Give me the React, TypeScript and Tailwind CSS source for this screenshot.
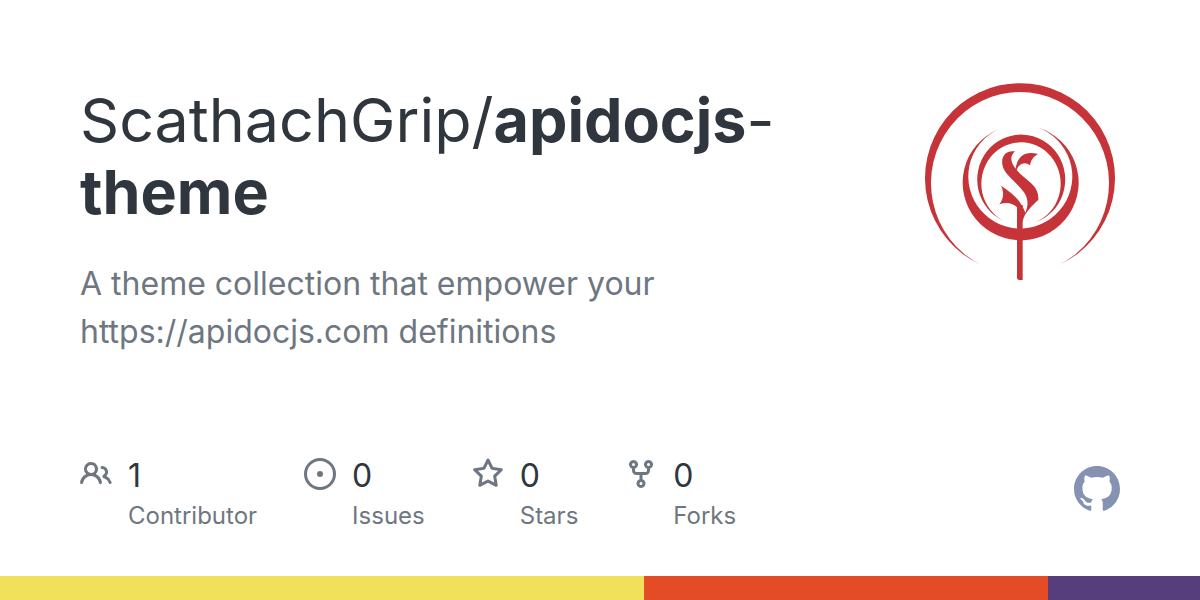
import type { ReactNode } from "react";

const stats = [
  {
    value: "1",
    label: "Contributor",
    path: "M2 5.5a3.5 3.5 0 1 1 5.898 2.549 5.508 5.508 0 0 1 3.034 4.084.75.75 0 1 1-1.482.235 4 4 0 0 0-7.9 0 .75.75 0 0 1-1.482-.236A5.507 5.507 0 0 1 3.102 8.05 3.493 3.493 0 0 1 2 5.5ZM11 4a3.001 3.001 0 0 1 2.22 5.018 5.01 5.01 0 0 1 2.56 3.012.749.749 0 0 1-.885.954.752.752 0 0 1-.549-.514 3.507 3.507 0 0 0-2.522-2.372.75.75 0 0 1-.574-.73v-.352a.75.75 0 0 1 .416-.672A1.5 1.5 0 0 0 11 5.5.75.75 0 0 1 11 4Zm-5.5-.5a2 2 0 1 0-.001 3.999A2 2 0 0 0 5.5 3.5Z",
  },
  {
    value: "0",
    label: "Issues",
    path: "M8 9.5a1.5 1.5 0 1 0 0-3 1.5 1.5 0 0 0 0 3ZM8 0a8 8 0 1 1 0 16A8 8 0 0 1 8 0ZM1.5 8a6.5 6.5 0 1 0 13 0 6.5 6.5 0 0 0-13 0Z",
  },
  {
    value: "0",
    label: "Stars",
    path: "M8 .25a.75.75 0 0 1 .673.418l1.882 3.815 4.21.612a.75.75 0 0 1 .416 1.279l-3.046 2.97.719 4.192a.751.751 0 0 1-1.088.791L8 12.347l-3.766 1.98a.75.75 0 0 1-1.088-.79l.72-4.194L.818 6.374a.75.75 0 0 1 .416-1.28l4.21-.611L7.327.668A.75.75 0 0 1 8 .25Zm0 2.445L6.615 5.5a.75.75 0 0 1-.564.41l-3.097.45 2.24 2.184a.75.75 0 0 1 .216.664l-.528 3.084 2.769-1.456a.75.75 0 0 1 .698 0l2.77 1.456-.53-3.084a.75.75 0 0 1 .216-.664l2.24-2.183-3.096-.45a.75.75 0 0 1-.564-.41L8 2.694Z",
  },
  {
    value: "0",
    label: "Forks",
    path: "M5 5.372v.878c0 .414.336.75.75.75h4.5a.75.75 0 0 0 .75-.75v-.878a2.25 2.25 0 1 1 1.5 0v.878a2.25 2.25 0 0 1-2.25 2.25h-1.5v2.128a2.251 2.251 0 1 1-1.5 0V8.5h-1.5A2.25 2.25 0 0 1 3.5 6.25v-.878a2.25 2.25 0 1 1 1.5 0ZM5 3.25a.75.75 0 1 0-1.5 0 .75.75 0 0 0 1.5 0Zm6.75.75a.75.75 0 1 0 0-1.5.75.75 0 0 0 0 1.5Zm-3 8.75a.75.75 0 1 0-1.5 0 .75.75 0 0 0 1.5 0Z",
  },
];

function Icon({ className, children }: { className: string; children: ReactNode }) {
  return (
    <svg viewBox="0 0 16 16" fill="currentColor" fillRule="evenodd" aria-hidden="true" className={className}>
      {children}
    </svg>
  );
}

function Avatar() {
  return (
    <svg viewBox="30 30 600 600" fill="#c63338" role="img" aria-label="ScathachGrip" className="size-[200px] shrink-0">
      <path d="M210 583A285 285 0 1 1 450 583A267 273 0 1 0 210 583Z" />
      <path d="M265 178A174 173 0 1 0 382 172A156 156 0 1 1 265 178Z" />
      <path d="M282 453A132 135 0 1 1 375 457A119 124 0 1 0 282 453Z" />
      <path d="M321 405H338V630H326Q321 630 321 622Z" />
      <path d="M315 244C285 240 272 262 278 288C284 315 325 340 344 370C354 388 356 405 346 428C335 400 318 375 273 347C284 368 280 388 268 403C290 395 310 400 321 412L338 455C342 430 365 408 385 390C388 345 350 335 320 300C325 282 345 272 360 286C363 270 370 260 384 252C350 242 322 255 317 296C300 275 300 258 315 244Z" />
    </svg>
  );
}

export default function App() {
  return (
    <div className="flex min-h-screen flex-col bg-white font-['Inter','Liberation_Sans',sans-serif] text-[#2f363d]">
      <main className="flex grow flex-col justify-between px-20 pt-20 pb-10">
        <div className="flex items-start justify-between">
          <div className="max-w-[720px]">
            <h1 className="pt-1 text-[61px] leading-[72px]">
              ScathachGrip/<strong className="font-bold">apidocjs</strong>-<br />
              <strong className="font-bold">theme</strong>
            </h1>
            <p className="max-w-[640px] pt-8 text-[32px] leading-[48px] text-[#6e7781]">
              A theme collection that empower your https://apidocjs.com definitions
            </p>
          </div>
          <Avatar />
        </div>
        <div className="flex items-end justify-between">
          <ul className="flex gap-[47px]">
            {stats.map((s) => (
              <li key={s.label} className="flex gap-4">
                <Icon className="mt-0.5 size-8 text-[#6e7781]">
                  <path d={s.path} />
                </Icon>
                <div>
                  <div className="text-[32px] leading-10">{s.value}</div>
                  <div className="text-2xl leading-10 text-[#6e7781]">{s.label}</div>
                </div>
              </li>
            ))}
          </ul>
          <Icon className="mb-6 size-[46px] text-[#8592b2]">
            <path d="M8 0c4.42 0 8 3.58 8 8a8.013 8.013 0 0 1-5.45 7.59c-.4.08-.55-.17-.55-.38 0-.27.01-1.13.01-2.2 0-.75-.25-1.23-.54-1.48 1.78-.2 3.65-.88 3.65-3.95 0-.88-.31-1.59-.82-2.15.08-.2.36-1.02-.08-2.12 0 0-.67-.22-2.2.82-.64-.18-1.32-.27-2-.27-.68 0-1.36.09-2 .27-1.53-1.03-2.2-.82-2.2-.82-.44 1.1-.16 1.92-.08 2.12-.51.56-.82 1.28-.82 2.15 0 3.06 1.86 3.75 3.64 3.95-.23.2-.44.55-.51 1.07-.46.21-1.61.55-2.33-.66-.15-.24-.6-.83-1.23-.82-.67.01-.27.38.01.53.34.19.73.9.82 1.13.16.45.68 1.31 2.69.94 0 .67.01 1.3.01 1.49 0 .21-.15.45-.55.38A7.995 7.995 0 0 1 0 8c0-4.42 3.58-8 8-8Z" />
          </Icon>
        </div>
      </main>
      <div className="flex h-6">
        <div className="grow-[644] bg-[#f1e05a]" />
        <div className="grow-[404] bg-[#e34c26]" />
        <div className="grow-[152] bg-[#563d7c]" />
      </div>
    </div>
  );
}
